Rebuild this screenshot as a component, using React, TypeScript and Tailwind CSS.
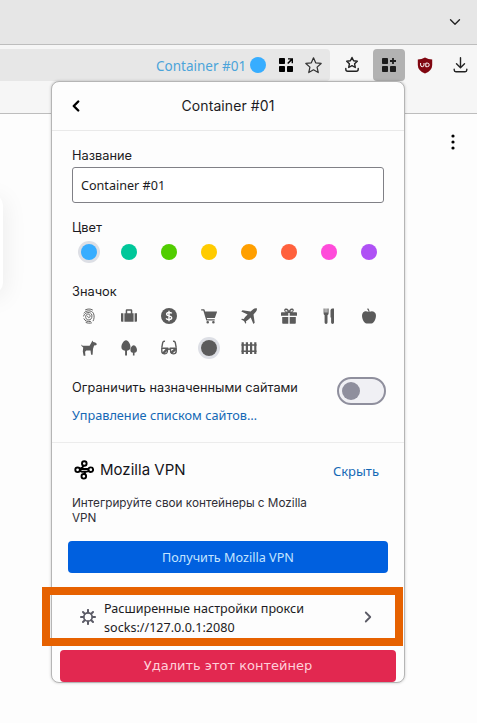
import type { ReactNode } from "react";
import { ChevronDown, ChevronLeft, ChevronRight } from "lucide-react";

const ubuntu = "font-['Noto_Sans',sans-serif]";

const colors = ["bg-[#37adff]", "bg-[#00c79a]", "bg-[#51cd00]", "bg-[#ffcb00]", "bg-[#ff9f00]", "bg-[#ff613d]", "bg-[#ff4bda]", "bg-[#af51f5]"];

const icons: ReactNode[] = [
  <g key="fingerprint" fill="none" stroke="#666" strokeWidth="1" strokeLinecap="round">
    <path d="M4.500 1.800C6.500.7 9.500.6 11.500 1.900M3 5C4.500 2.300 10.500 1.800 12.400 5.200 13.600 7.700 13.200 11 12.200 12.800M2.600 8C3.500 3.700 10.300 3.200 10.900 7.200 11.300 10.500 9.500 12 7.800 12 5.400 12 4.400 10 4.700 8.200 5.200 5.300 9 5.500 9.100 7.900 9.100 10.200 6.500 10.200 6.600 8.300M3 10.800C4.200 13.200 6.300 13.900 9.500 13.500M5 14.500C6.500 15.300 8.500 15.400 10.500 14.900" />
  </g>,
  <path key="briefcase" d="M0 5.200h2.400v8.600H.8a.8.8 0 0 1-.8-.8zM13.600 5.200H16V13a.8.8 0 0 1-.8.8h-1.600zM3.400 5.200h1.300V2.400Q4.700 1.200 5.900 1.200h4.200q1.200 0 1.200 1.200v2.800h1.300v8.600H3.400zM6.200 2.700v2.500h3.600V2.700z" fillRule="evenodd" />,
  <g key="dollar">
    <circle cx="8" cy="8" r="8" />
    <path d="M10.800 5.400C9.800 4.200 5.600 4 5.600 6.200 5.600 8.500 10.700 7.300 10.700 9.800 10.700 12.200 6.200 12 5.100 10.400M8 2.800v10.400" fill="none" stroke="#fff" strokeWidth="1.400" />
  </g>,
  <path key="cart" d="M.2 1.200h2.600q.6 0 .8.6l.5 1.700h11.600q.5 0 .3.6l-2 5.500q-.2.500-.7.500H5.800l.4 1.100h7.500v1.300H5.300L2.300 2.600H.2zM6.700 12.900a1.300 1.300 0 1 1 0 2.600 1.300 1.300 0 0 1 0-2.600m5.700 0a1.300 1.300 0 1 1 0 2.600 1.300 1.300 0 0 1 0-2.600" />,
  <path key="plane" d="M15.800.3Q14-.3 12.200 1.200L9.600 3.500 1.500 2.200.3 3.400 6.600 6.500Q3.800 9 2.800 11L.8 10.800.2 11.500 3 13l1.500 2.800.7-.7L5 13.200Q7.200 12 9.700 9.500L12.400 16l1.300-1.200-1.200-8.200 2.400-2.800Q16.300 2 15.800.3" />,
  <path key="gift" d="M.8 4.200h3.700C2 2.600 3.500.3 5.400.6 7 .9 7.700 2 8 2.700 8.300 2 9 .9 10.600.6 12.500.3 14 2.600 11.500 4.200h3.700q.8 0 .8.8v2.800H8.700V5H7.300v2.800H0V5q0-.8.800-.8M5 1.900c-1 .1-.9 1.700.6 1.700h1C6.500 2.700 5.900 1.800 5 1.900m6 0c-.9-.1-1.500.8-1.600 1.700h1c1.500 0 1.600-1.600.6-1.700M1.200 9h6.100v6.800H2q-.8 0-.8-.8zM8.700 9h6.100v6q0 .8-.8.8H8.700z" fillRule="evenodd" />,
  <path key="cutlery" d="M2.600.5h1v4h.9v-4h1v4h.9v-4h1.200V5.400q0 1.200-1.100 1.800v7.300a1.450 1.450 0 0 1-2.900 0V7.200Q2.600 6.600 2.600 5.400zM9.500 2.200Q9.700.5 11.200.5H13v14a1.450 1.450 0 0 1-2.900 0V9.500h-.6z" />,
  <path key="fruit" d="M7.600 3.900Q7.300 2 6 1.100L7.100.3Q8.400 1.700 8.600 3.800 12.500 2.400 14.400 5.200C16 8.200 14 13.600 11.400 15.200 9.800 16 8.800 15.400 8 15.400s-1.800.6-3.400-.2C2 13.600 0 8.200 1.600 5.200 3 2.800 5.400 2.800 7.600 3.900" />,
  <path key="pet" d="M0 4.300q.6 1.300 2 1.500l6.600-.1 2.100-3.700.5-1.600L12.300 2l2 .4 1.700 1.700-1 1.200-1.900.2-1.100 3.600-.4 5.600h-1.500L9.500 10.600H5.300l-1.200 1.200.3 3.900H2.600l-.8-4.200.4-4Q.2 6.800 0 4.300" />,
  <path key="tree" d="M5 .2C7.500.7 9.500 4 9.500 7c0 2-1.200 3.500-3.500 3.800v4.800H4.100v-4.800C1.600 10.500.4 9 .4 7 .4 4 2.500.7 5 .2M12.700 5.200c2 .3 3.300 2.800 3.300 4.800 0 1.600-.9 2.600-2.500 2.800v2.800h-1.600v-2.800c-1.600-.2-2.500-1.200-2.500-2.800 0-2 1.300-4.500 3.300-4.800" />,
  <g key="glasses" fill="none" stroke="#5b5b5b" strokeWidth="1.400">
    <path d="M4 1.300Q2.200.8 1.700 2.600L.8 7.600M12 1.300q1.800-.5 2.300 1.300l.9 5M6.600 9.500Q8 8.600 9.400 9.500" />
    <path d="M.8 8.300h5.800l-.3 3.700q-.3 1.900-2.500 1.900-3 0-3-2.600zM15.200 8.300H9.400l.3 3.700q.3 1.900 2.500 1.900 3 0 3-2.600z" />
    <path d="M2.200 13.400 6.200 9M10 13.200 14.600 9" strokeWidth="2.400" />
  </g>,
  <circle key="circle" cx="8" cy="8" r="8" />,
  <g key="fence" fill="none" stroke="#5b5b5b">
    <path d="M1.700 2.200V14M5.900 2.200V14M10.100 2.200V14M14.300 2.200V14" strokeWidth="2.200" />
    <path d="M.5 5h15M.5 11.300h15" strokeWidth="1.400" />
  </g>,
];

function Star({ small = false }: { small?: boolean }) {
  return (
    <svg viewBox="0 0 18 18" className={small ? "h-[18px] w-[18px]" : "h-[17px] w-[17px]"} fill="none" stroke="#333" strokeWidth="1.300" strokeLinejoin="round" strokeLinecap="round">
      {small ? (
        <>
          <path d="m9 1.500 1.600 3.300 3.700.5-2.700 2.500.7 3.700L9 9.700l-3.300 1.800.7-3.700L3.700 5.300l3.700-.5z" strokeWidth="1.400" stroke="#222" />
          <path d="M2.800 12.500v.8q0 1.900 1.900 1.900h8.600q1.900 0 1.900-1.900v-.8" stroke="#222" strokeWidth="1.400" />
        </>
      ) : (
        <path d="m9 .9 2.300 5.300 5.800.6-4.300 3.900 1.200 5.800-5-3-5 3 1.200-5.800L.9 6.800l5.800-.6z" />
      )}
    </svg>
  );
}

function Tiles({ plus = false }: { plus?: boolean }) {
  return (
    <svg viewBox="0 0 14 14" className="h-[14px] w-[14px]" fill={plus ? "#1c1c1c" : "#000"}>
      <rect width="6" height="6" rx=".8" />
      <rect y="8" width="6" height="6" rx=".8" />
      <rect x="8" y="8" width="6" height="6" rx=".8" />
      {plus ? (
        <path d="M10.100 0h1.800v2.100H14v1.800h-2.100V6h-1.800V3.900H8V2.100h2.100z" />
      ) : (
        <path d="M9 .2h5v5h-1.400V2.700L9.300 6 8.200 4.900l3.300-3.300H9z" />
      )}
    </svg>
  );
}

function Toolbar() {
  return (
    <div className="flex h-[69px] items-start border-b border-[#bdbdbd] bg-[#f6f6f6] pt-1">
      <div className="flex h-8 w-[330px] items-center rounded-r bg-[#e7e7e7] pl-[156px]">
        <span className={`${ubuntu} mt-[2px] w-[94px] whitespace-nowrap text-[13.500px] text-[#4ba4da]`}>Container #01</span>
        <span className="h-4 w-4 shrink-0 rounded-full bg-[#37adff]" />
        <span className="ml-[13px] shrink-0"><Tiles /></span>
        <span className="ml-[12px] shrink-0"><Star /></span>
      </div>
      <div className="ml-[13px] flex h-8 items-center"><Star small /></div>
      <div className="ml-[12px] flex h-8 w-8 items-center justify-center rounded bg-[#b2b2b2]"><Tiles plus /></div>
      <div className="ml-[12px] flex h-8 items-center">
        <svg viewBox="0 0 16 17" className="h-[17px] w-4">
          <path d="M8 .5q3.500 2 7.200 2v5.500q0 5.500-7.200 8.600Q.8 13.500.8 8V2.500q3.700 0 7.200-2" fill="#800610" />
          <path d="M3.600 6v1.900q0 1.800 1.700 1.800T7 7.900V6M8.800 6.100h1.600a1.800 1.800 0 0 1 0 3.600H8.800z" fill="none" stroke="#fff" strokeWidth="1" />
        </svg>
      </div>
      <svg viewBox="0 0 16 16" className="mt-[8px] ml-[20px] h-4 w-4" fill="none" stroke="#222" strokeWidth="1.400" strokeLinecap="round" strokeLinejoin="round">
        <path d="M7.500.8v9.700M3.500 6.800l4 3.900 4-3.900M1.200 12.200v.8q0 1.700 1.700 1.700h9.200q1.700 0 1.700-1.700v-.8" />
      </svg>
    </div>
  );
}

function Panel() {
  return (
    <section className="absolute left-[51px] top-[81px] h-[602px] w-[354px] overflow-hidden rounded-lg border border-[#b5b5b5] bg-[#fdfdfd] shadow-[0_0_3px_rgba(0,0,0,0.22)]">
      <header className="flex h-[49px] items-center border-b border-[#e9e9e9] px-4">
        <ChevronLeft className="-ml-[1px] h-[18px] w-[18px] text-black" strokeWidth={3.200} />
        <h1 className="-mt-px flex-1 pr-[17px] text-center text-[14px] tracking-[0.080px] text-[#1c1b22]">Container #01</h1>
      </header>

      <div className="h-[312px] border-b border-[#ececec] px-5 pt-4">
        <label className="block h-5 text-[12.800px] leading-[18px]">Название</label>
        <div className={`${ubuntu} flex h-9 items-center rounded-[3px] border border-[#808086] bg-white px-2 pt-[2px] text-[12.600px]`}>Container #01</div>
        <div className="mt-4 h-[18px] text-[12.800px] leading-[18px]">Цвет</div>
        <div className="-ml-[3px] grid grid-cols-[repeat(8,40px)] pt-[3px]">
          {colors.map((color, i) => (
            <span key={color} className="flex h-6 w-10 items-center justify-center">
              <span className={`h-4 w-4 rounded-full ${color} ${i === 0 ? "shadow-[0_0_0_3px_#dddfe5]" : ""}`} />
            </span>
          ))}
        </div>
        <div className="mt-[19px] h-[17px] text-[12.800px] leading-[18px]">Значок</div>
        <div className="-ml-[3px] grid grid-cols-[repeat(8,40px)]">
          {icons.map((icon, i) => (
            <span key={i} className="flex h-8 w-10 items-center justify-center">
              <svg viewBox="0 0 16 16" className={`h-4 w-4 overflow-visible rounded-full ${i === 11 ? "shadow-[0_0_0_3px_#dddfe5]" : ""}`} fill="#5b5b5b">{icon}</svg>
            </span>
          ))}
        </div>
        <div className="mt-[10px] flex items-start justify-between">
          <div>
            <div className="mt-[5px] h-[27px] text-[12.760px] leading-[18px]">Ограничить назначенными сайтами</div>
            <a className={`${ubuntu} block text-[12.720px] leading-[18px] text-[#1468b5]`}>Управление списком сайтов…</a>
          </div>
          <span className="-mr-[2px] mt-[3px] flex h-7 w-[49px] items-center rounded-full border-2 border-[#8f8f9d] bg-[#f0f0f4] pl-[3px]">
            <span className="h-[18px] w-[18px] rounded-full bg-[#8f8f9d]" />
          </span>
        </div>
      </div>

      <div className="px-4 pt-[15px]">
        <div className="flex h-6 items-center pl-[6px] pr-[9px]">
          <svg viewBox="0 0 20 20" className="h-5 w-5" fill="none" stroke="#000" strokeWidth="1.900" strokeLinecap="round">
            <path d="M9.200 5.900Q8.700 7.700 7.200 7.900M6 9h8.200M6 10.800q1.500 1.200 3.500 1h1.300Q13 11.800 14.500 11M10.700 13.900 11.300 12" />
            <circle cx="10.300" cy="3.500" r="2.300" />
            <circle cx="3.600" cy="9.800" r="2.300" />
            <circle cx="16.800" cy="9.700" r="2.300" />
            <circle cx="9.800" cy="16.300" r="2.300" />
          </svg>
          <h2 className="ml-[6px] text-[15px] tracking-[0.020px] text-[#15141a]">Mozilla VPN</h2>
          <a className={`${ubuntu} ml-auto mt-[4px] text-[13px] text-[#1468b5]`}>Скрыть</a>
        </div>
        <p className="ml-1 mt-[14px] text-[11.740px] leading-[15px] text-[#302f37]">Интегрируйте свои контейнеры с Mozilla<br />VPN</p>
        <button className={`${ubuntu} mt-[15px] h-8 w-[320px] rounded bg-[#0060df] pt-px text-[12.650px] text-[#c4e5ff]`}>Получить Mozilla VPN</button>
      </div>

      <div className="mt-[22px] flex h-[44px] items-center px-7">
        <svg viewBox="0 0 16 16" className="h-4 w-4 shrink-0" fill="none" stroke="#5b5b66" strokeWidth="1.700" strokeLinecap="round">
          <circle cx="8" cy="8" r="4.200" />
          <path d="M8 .9v2.600M8 12.500v2.600M.9 8h2.600M12.500 8h2.600M3 3l1.700 1.700M11.300 11.300 13 13M13 3l-1.700 1.700M4.700 11.300 3 13" strokeWidth="2" />
        </svg>
        <div className={`${ubuntu} ml-2 mt-[2px] whitespace-nowrap text-[12.580px] leading-[19px]`}>
          <div>Расширенные настройки прокси</div>
          <div>socks://127.0.0.1:2080</div>
        </div>
        <ChevronRight className="-mr-[1px] ml-auto h-[18px] w-[18px] text-[#5b5b66]" strokeWidth={2.400} />
      </div>
      <button className="ml-2 mt-[11px] h-8 w-[336px] rounded bg-[#e22850] font-['DejaVu_Sans',sans-serif] text-[13px] text-[#ffd0da]">Удалить этот контейнер</button>
    </section>
  );
}

export default function App() {
  return (
    <main className="relative h-[723px] w-[477px] overflow-hidden bg-[#fdfdfd] font-[Inter,sans-serif] text-[#1c1b22]">
      <div className="flex h-[45px] items-center justify-end border-b border-[#bdbdbd] bg-[#e6e6e6] pr-[13px]">
        <ChevronDown className="h-[18px] w-[18px] text-[#222]" strokeWidth={1.800} />
      </div>
      <Toolbar />
      <div className="flex items-start justify-between pr-[22px] pt-[20px]">
        <div className="-ml-[20px] mt-[60px] h-[100px] w-[23px] rounded-xl bg-white shadow-[1px_4px_24px_rgba(0,0,0,0.08)]" />
        <svg viewBox="0 0 4 16" className="h-4 w-1" fill="#000">
          <circle cx="2" cy="2" r="1.600" />
          <circle cx="2" cy="8" r="1.600" />
          <circle cx="2" cy="14" r="1.600" />
        </svg>
      </div>
      <Panel />
      <div className="absolute left-[42px] top-[587px] h-[59px] w-[361px] border-8 border-[#e66100]" />
    </main>
  );
}
